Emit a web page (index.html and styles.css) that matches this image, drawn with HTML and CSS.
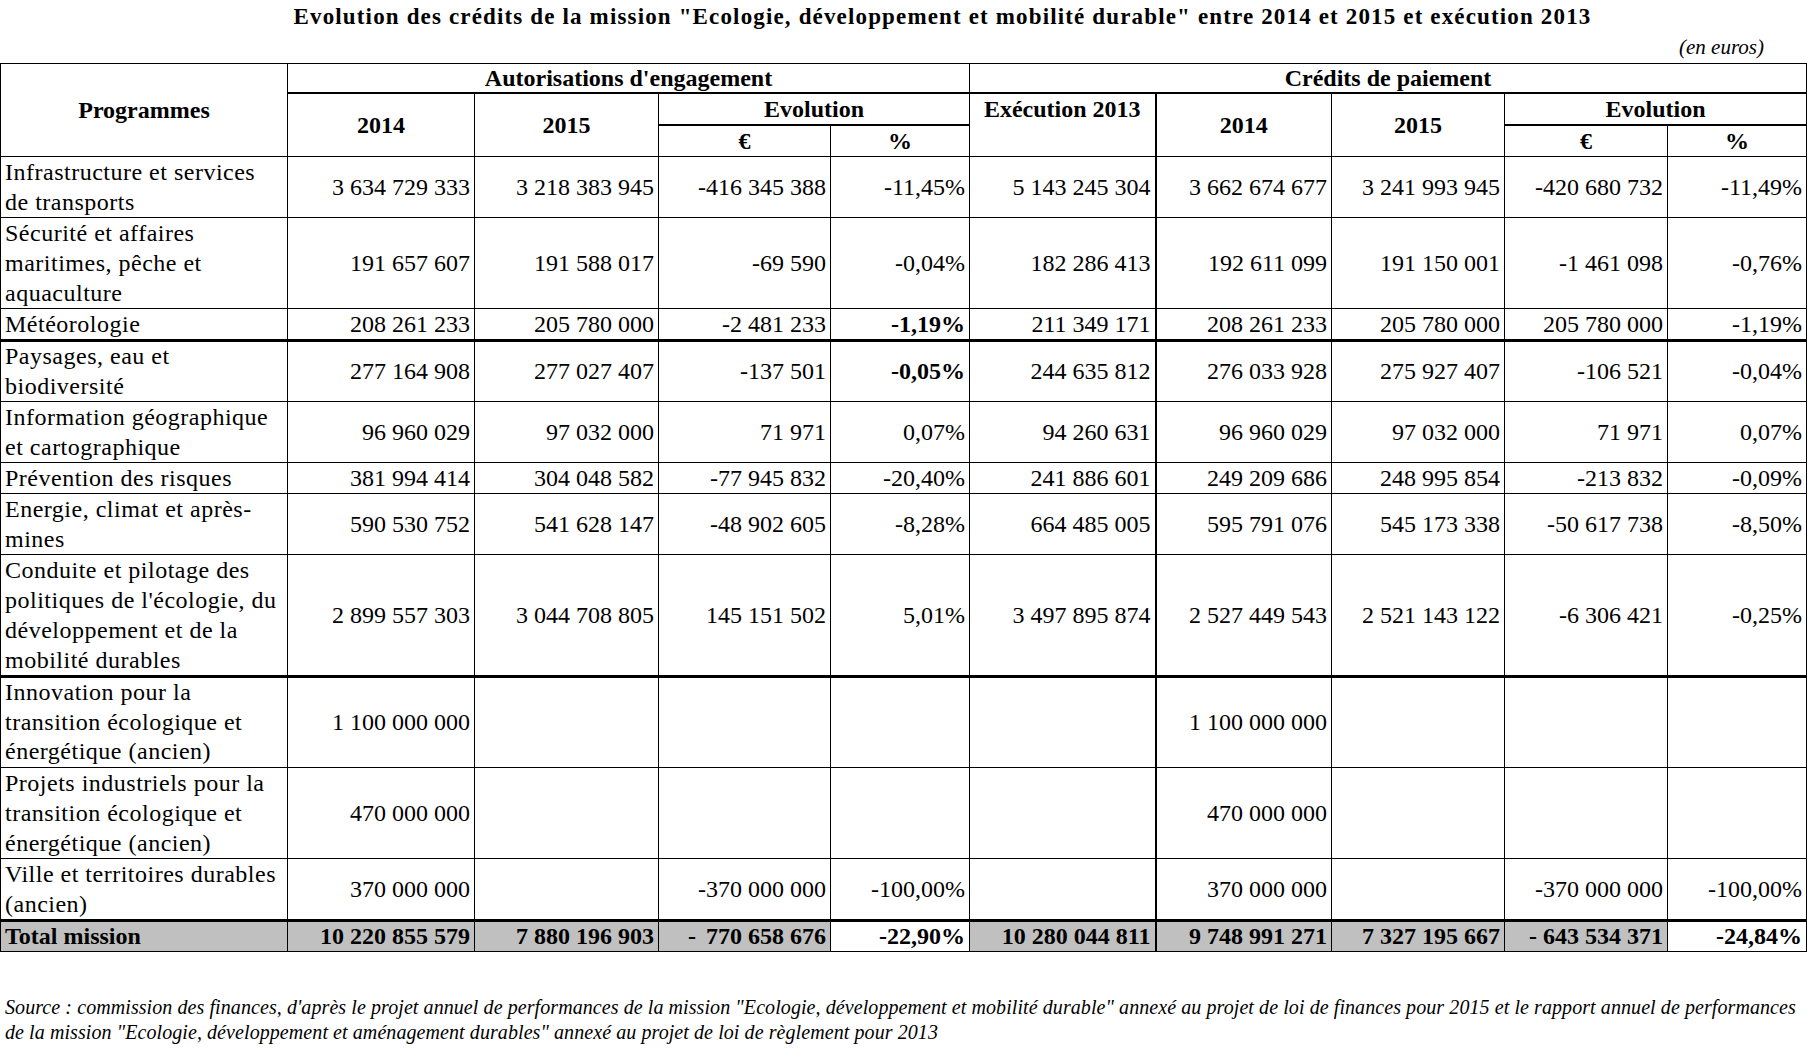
FILE: index.html
```html
<!DOCTYPE html>
<html lang="fr">
<head>
<meta charset="utf-8">
<title>Evolution des crédits</title>
<link rel="stylesheet" href="styles.css">
</head>
<body>
<div class="page">
  <div class="title">Evolution des crédits de la mission "Ecologie, développement et mobilité durable" entre 2014 et 2015 et exécution 2013</div>
  <div class="unit">(en euros)</div>
  <table class="grid">
    <colgroup>
      <col class="c-prog"><col class="c-ae14"><col class="c-ae15"><col class="c-aeeur"><col class="c-aepct">
      <col class="c-exec"><col class="c-cp14"><col class="c-cp15"><col class="c-cpeur"><col class="c-cppct">
    </colgroup>
    <thead>
      <tr class="h1">
        <th rowspan="3" class="prog-h">Programmes</th>
        <th colspan="4" class="group">Autorisations d'engagement</th>
        <th colspan="5" class="group">Crédits de paiement</th>
      </tr>
      <tr class="h2">
        <th rowspan="2">2014</th>
        <th rowspan="2">2015</th>
        <th colspan="2" class="evo">Evolution</th>
        <th rowspan="2" class="exec">Exécution 2013</th>
        <th rowspan="2" class="sep">2014</th>
        <th rowspan="2">2015</th>
        <th colspan="2" class="evo">Evolution</th>
      </tr>
      <tr class="h3">
        <th>€</th><th>%</th><th>€</th><th>%</th>
      </tr>
    </thead>
    <tbody>
      <tr>
        <td class="lab">Infrastructure et services<br>de transports</td>
        <td>3 634 729 333</td><td>3 218 383 945</td><td>-416 345 388</td><td>-11,45%</td>
        <td>5 143 245 304</td><td class="sep">3 662 674 677</td><td>3 241 993 945</td><td>-420 680 732</td><td>-11,49%</td>
      </tr>
      <tr>
        <td class="lab">Sécurité et affaires<br>maritimes, pêche et<br>aquaculture</td>
        <td>191 657 607</td><td>191 588 017</td><td>-69 590</td><td>-0,04%</td>
        <td>182 286 413</td><td class="sep">192 611 099</td><td>191 150 001</td><td>-1 461 098</td><td>-0,76%</td>
      </tr>
      <tr class="thick">
        <td class="lab">Météorologie</td>
        <td>208 261 233</td><td>205 780 000</td><td>-2 481 233</td><td class="b">-1,19%</td>
        <td>211 349 171</td><td class="sep">208 261 233</td><td>205 780 000</td><td>205 780 000</td><td>-1,19%</td>
      </tr>
      <tr>
        <td class="lab">Paysages, eau et<br>biodiversité</td>
        <td>277 164 908</td><td>277 027 407</td><td>-137 501</td><td class="b">-0,05%</td>
        <td>244 635 812</td><td class="sep">276 033 928</td><td>275 927 407</td><td>-106 521</td><td>-0,04%</td>
      </tr>
      <tr>
        <td class="lab">Information géographique<br>et cartographique</td>
        <td>96 960 029</td><td>97 032 000</td><td>71 971</td><td>0,07%</td>
        <td>94 260 631</td><td class="sep">96 960 029</td><td>97 032 000</td><td>71 971</td><td>0,07%</td>
      </tr>
      <tr>
        <td class="lab">Prévention des risques</td>
        <td>381 994 414</td><td>304 048 582</td><td>-77 945 832</td><td>-20,40%</td>
        <td>241 886 601</td><td class="sep">249 209 686</td><td>248 995 854</td><td>-213 832</td><td>-0,09%</td>
      </tr>
      <tr>
        <td class="lab">Energie, climat et après-<br>mines</td>
        <td>590 530 752</td><td>541 628 147</td><td>-48 902 605</td><td>-8,28%</td>
        <td>664 485 005</td><td class="sep">595 791 076</td><td>545 173 338</td><td>-50 617 738</td><td>-8,50%</td>
      </tr>
      <tr class="thick">
        <td class="lab">Conduite et pilotage des<br>politiques de l'écologie, du<br>développement et de la<br>mobilité durables</td>
        <td>2 899 557 303</td><td>3 044 708 805</td><td>145 151 502</td><td>5,01%</td>
        <td>3 497 895 874</td><td class="sep">2 527 449 543</td><td>2 521 143 122</td><td>-6 306 421</td><td>-0,25%</td>
      </tr>
      <tr>
        <td class="lab">Innovation pour la<br>transition écologique et<br>énergétique (ancien)</td>
        <td>1 100 000 000</td><td></td><td></td><td></td>
        <td></td><td class="sep">1 100 000 000</td><td></td><td></td><td></td>
      </tr>
      <tr>
        <td class="lab">Projets industriels pour la<br>transition écologique et<br>énergétique (ancien)</td>
        <td>470 000 000</td><td></td><td></td><td></td>
        <td></td><td class="sep">470 000 000</td><td></td><td></td><td></td>
      </tr>
      <tr class="thick">
        <td class="lab">Ville et territoires durables<br>(ancien)</td>
        <td>370 000 000</td><td></td><td>-370 000 000</td><td>-100,00%</td>
        <td></td><td class="sep">370 000 000</td><td></td><td>-370 000 000</td><td>-100,00%</td>
      </tr>
      <tr class="total">
        <td class="lab">Total mission</td>
        <td>10 220 855 579</td><td>7 880 196 903</td><td class="acct"><span class="dash">-</span>770 658 676</td><td class="white">-22,90%</td>
        <td>10 280 044 811</td><td class="sep">9 748 991 271</td><td>7 327 195 667</td><td class="acct cp"><span class="dash">-</span>643 534 371</td><td class="white">-24,84%</td>
      </tr>
    </tbody>
  </table>
  <p class="source">Source : commission des finances, d'après le projet annuel de performances de la mission "Ecologie, développement et mobilité durable" annexé au projet de loi de finances pour 2015 et le rapport annuel de performances<br>de la mission "Ecologie, développement et aménagement durables" annexé au projet de loi de règlement pour 2013</p>
</div>
</body>
</html>
```
FILE: styles.css
```css
html, body {
  margin: 0;
  padding: 0;
  background: #ffffff;
}
.page {
  font-family: "Liberation Serif", "Times New Roman", serif;
  color: #000;
  width: 1807px;
}
.title {
  font-weight: bold;
  font-size: 23px;
  letter-spacing: 1.15px;
  line-height: 34px;
  text-align: center;
  padding-left: 78px;
  white-space: nowrap;
}
.unit {
  font-style: italic;
  font-size: 21px;
  line-height: 26px;
  text-align: right;
  padding-right: 43px;
}
.grid {
  margin-top: 3px;
  border-collapse: collapse;
  table-layout: fixed;
  width: 1806px;
  font-size: 24px;
}
.c-prog { width: 287px; }
.c-ae14 { width: 187px; }
.c-ae15 { width: 184px; }
.c-aeeur { width: 172px; }
.c-aepct { width: 139px; }
.c-exec { width: 186px; }
.c-cp14 { width: 176px; }
.c-cp15 { width: 173px; }
.c-cpeur { width: 163px; }
.c-cppct { width: 139px; }

.grid th, .grid td {
  border: 1px solid #000;
  padding: 0 4px;
  line-height: 30px;
  white-space: nowrap;
}
.grid th {
  font-weight: bold;
  text-align: center;
  vertical-align: middle;
}
.grid .h1 th { line-height: 28px; }
.grid .h1 th.group { border-bottom: 2px solid #000; }
.grid .h2 { height: 32px; }
.grid .h2 th.evo { border-bottom: 2px solid #000; }
.grid .h2 th.exec { vertical-align: top; }
.grid .sep { border-left: 2px solid #000; }

.grid td {
  text-align: right;
  vertical-align: middle;
}
.grid td.lab {
  text-align: left;
  letter-spacing: 0.5px;
}
.grid td.b { font-weight: bold; }
.grid tr.thick td { border-bottom: 3px solid #000; }
.grid tr.thick + tr td { line-height: 29.5px; }

.grid tr.total td {
  background: #c0c0c0;
  font-weight: bold;
}
.grid tr.total td.lab { letter-spacing: 0; }
.grid tr.total td.white { background: #ffffff; }
.grid td.acct .dash {
  float: left;
  padding-left: 25px;
}
.grid td.acct.cp .dash {
  padding-left: 20px;
}
.source {
  margin: 43px 0 0 0;
  padding-left: 5px;
  font-style: italic;
  font-size: 20px;
  letter-spacing: 0.08px;
  line-height: 25px;
  white-space: nowrap;
}
```
